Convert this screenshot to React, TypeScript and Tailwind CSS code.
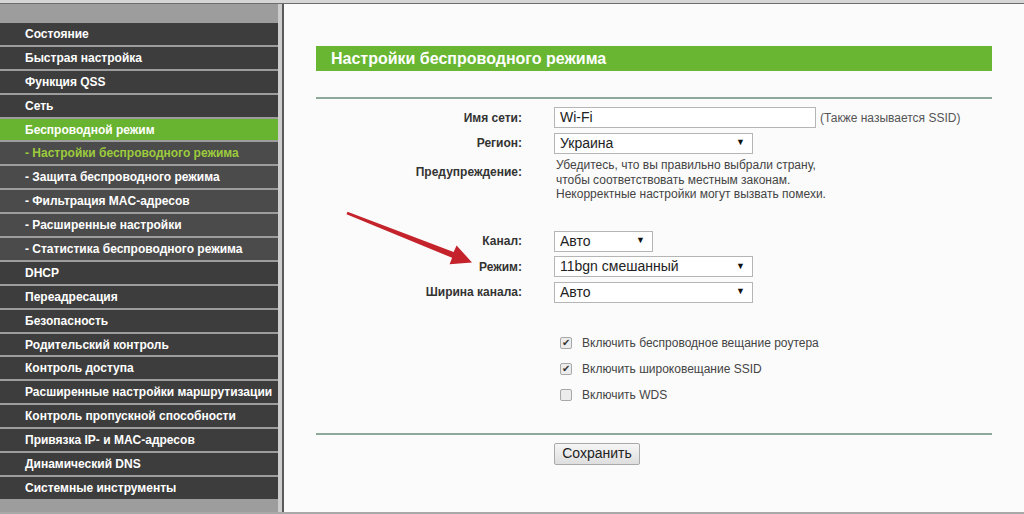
type MenuItem = { label: string; kind: "main" | "sub"; active?: boolean }

const menu: MenuItem[] = [
  { label: "Состояние", kind: "main" },
  { label: "Быстрая настройка", kind: "main" },
  { label: "Функция QSS", kind: "main" },
  { label: "Сеть", kind: "main" },
  { label: "Беспроводной режим", kind: "main", active: true },
  { label: "- Настройки беспроводного режима", kind: "sub", active: true },
  { label: "- Защита беспроводного режима", kind: "sub" },
  { label: "- Фильтрация MAC-адресов", kind: "sub" },
  { label: "- Расширенные настройки", kind: "sub" },
  { label: "- Статистика беспроводного режима", kind: "sub" },
  { label: "DHCP", kind: "main" },
  { label: "Переадресация", kind: "main" },
  { label: "Безопасность", kind: "main" },
  { label: "Родительский контроль", kind: "main" },
  { label: "Контроль доступа", kind: "main" },
  { label: "Расширенные настройки маршрутизации", kind: "main" },
  { label: "Контроль пропускной способности", kind: "main" },
  { label: "Привязка IP- и MAC-адресов", kind: "main" },
  { label: "Динамический DNS", kind: "main" },
  { label: "Системные инструменты", kind: "main" },
]

function Sidebar() {
  return (
    <div className="w-[278px] shrink-0 bg-[#9d9d9d] pt-[19px] flex flex-col gap-[2px]">
      {menu.map((item) => {
        let cls = "h-[21.9px] flex items-center pl-[25px] text-[12px] font-bold whitespace-nowrap "
        if (item.kind === "main" && item.active) cls += "bg-[#68b32f] text-white"
        else if (item.kind === "main") cls += "bg-[#3d3d3d] text-white"
        else if (item.active) cls += "bg-[#4b4b4b] text-[#9ccb3b]"
        else cls += "bg-[#4b4b4b] text-white"
        return (
          <div key={item.label} className={cls}>
            {item.label}
          </div>
        )
      })}
    </div>
  )
}

function Label({ children, className = "" }: { children: React.ReactNode; className?: string }) {
  return (
    <div className={"text-right text-[12px] font-bold text-[#333] " + className}>{children}</div>
  )
}

function Select({ value, width }: { value: string; width: string }) {
  return (
    <div
      className={
        "h-[21px] bg-white border border-[#b5b5b5] flex items-center justify-between pl-[5px] pr-[7px] text-[14px] text-[#222] " +
        width
      }
    >
      <span>{value}</span>
      <span className="text-[9px] text-[#111]">▼</span>
    </div>
  )
}

function Check({ checked, label }: { checked: boolean; label: string }) {
  return (
    <div className="h-[26px] flex items-center pl-[6px] gap-[10px]">
      <span className="w-[12px] h-[12px] rounded-[2px] border border-[#a8a8a8] bg-[#ececec] flex items-center justify-center text-[10px] leading-none text-[#333]">
        {checked ? "✔" : ""}
      </span>
      <span className="text-[12px] text-[#444]">{label}</span>
    </div>
  )
}

function Row({ label, children }: { label: string; children: React.ReactNode }) {
  return (
    <div className="flex items-center h-[21px] mb-[4.5px]">
      <Label className="w-[206px]">{label}</Label>
      <div className="ml-[32px] flex items-center">{children}</div>
    </div>
  )
}

export default function App() {
  return (
    <div
      className="relative w-[1024px] h-[514px] overflow-hidden bg-[#fbfbfb] flex flex-col"
      style={{ fontFamily: '"Liberation Sans", Arial, sans-serif' }}
    >
      <div className="h-[3px] shrink-0 bg-[#d6d6d6] border-b border-[#6e6e6e] box-content" />
      <div className="flex flex-1 min-h-0">
        <Sidebar />
        <div className="w-[4px] shrink-0 bg-[#cdcdcd]" />
        <div className="w-[2px] shrink-0 bg-[#5a5a5a]" />

        {/* content */}
        <div className="flex-1 pl-[32px] pr-[32px] pt-[42px]">
          <div className="h-[25px] bg-[#68b631] flex items-center pl-[15px] text-white text-[16px] font-bold">
            Настройки беспроводного режима
          </div>
          <div className="mt-[26px] h-[2px] bg-[#8ca999]" />

          <div className="pt-[8px]">
            <Row label="Имя сети:">
              <div className="w-[262px] h-[21px] bg-white border border-[#b5b5b5] flex items-center pl-[5px] text-[14px] text-[#222]">
                Wi-Fi
              </div>
              <span className="ml-[4px] text-[12px] text-[#555]">(Также называется SSID)</span>
            </Row>
            <Row label="Регион:">
              <Select value="Украина" width="w-[199px]" />
            </Row>
            <div className="flex">
              <Label className="w-[206px] pt-[5px]">Предупреждение:</Label>
              <div className="ml-[34px] text-[12px] leading-[14.5px] text-[#444]">
                <div>Убедитесь, что вы правильно выбрали страну,</div>
                <div>чтобы соответствовать местным законам.</div>
                <div>Некорректные настройки могут вызвать помехи.</div>
              </div>
            </div>

            <div className="mt-[29px]">
              <Row label="Канал:">
                <Select value="Авто" width="w-[99px]" />
              </Row>
              <Row label="Режим:">
                <Select value="11bgn смешанный" width="w-[199px]" />
              </Row>
              <Row label="Ширина канала:">
                <Select value="Авто" width="w-[199px]" />
              </Row>
            </div>

            <div className="mt-[27px] ml-[238px]">
              <Check checked label="Включить беспроводное вещание роутера" />
              <Check checked label="Включить широковещание SSID" />
              <Check checked={false} label="Включить WDS" />
            </div>
          </div>

          <div className="mt-[25px] h-[2px] bg-[#8ca999]" />
          <div className="mt-[8px] ml-[238px]">
            <button className="h-[22px] w-[86px] border border-[#a9a9a9] rounded-[2px] bg-gradient-to-b from-[#f6f6f6] to-[#dedede] text-[14px] text-[#222] flex items-center justify-center">
              Сохранить
            </button>
          </div>
        </div>
      </div>
      <div className="h-[2px] shrink-0 bg-[#a9a9a9]" />

      {/* red annotation arrow */}
      <svg className="absolute left-0 top-0 pointer-events-none" width="1024" height="514">
        <polygon
          points="347.5,211.8 453.6,251.9 456.6,245.5 472,262.5 449.6,264.2 452.1,257.8 346.5,214.2"
          fill="#c4232b"
        />
      </svg>
    </div>
  )
}
